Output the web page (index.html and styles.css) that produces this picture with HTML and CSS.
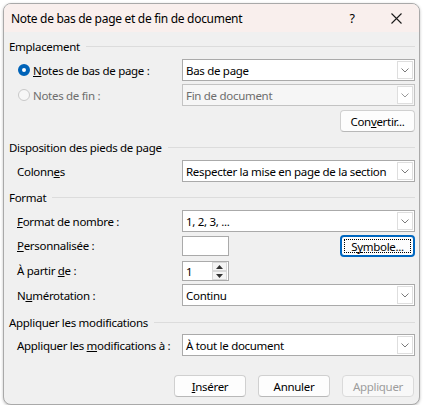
FILE: index.html
```html
<!DOCTYPE html>
<html lang="fr">
<head>
<meta charset="utf-8">
<title>Note de bas de page et de fin de document</title>
<link rel="stylesheet" href="styles.css">
</head>
<body>
<div class="dialog">
  <div class="titlebar">
    <span class="title">Note de bas de page et de fin de document</span>
    <span class="help">?</span>
    <span class="close"><svg width="11" height="11" viewBox="0 0 11 11"><path d="M0.5 0.5 L10.5 10.5 M10.5 0.5 L0.5 10.5" stroke="#1a1a1a" stroke-width="1.1" fill="none"/></svg></span>
  </div>
  <div class="body">
    <div class="group-head h1"><span>Emplacement</span><i class="rule"></i></div>
    <div class="row r-a">
      <div class="radio-label"><span class="radio on"></span><span><u>N</u>otes de bas de page :</span></div>
      <div class="combo"><span class="val">Bas de page</span><span class="arrow"><svg width="8" height="5" viewBox="0 0 8 5"><path d="M0.5 0.5 L4 4 L7.5 0.5" stroke="#7a7a7a" fill="none"/></svg></span></div>
    </div>
    <div class="row r-b">
      <div class="radio-label disabled"><span class="radio off"></span><span>Notes de fin :</span></div>
      <div class="combo dis"><span class="val">Fin de document</span><span class="arrow"><svg width="8" height="5" viewBox="0 0 8 5"><path d="M0.5 0.5 L4 4 L7.5 0.5" stroke="#9a9a9a" fill="none"/></svg></span></div>
    </div>
    <div class="btn-row r-c"><span class="btn wide">Con<u>v</u>ertir...</span></div>

    <div class="group-head h2"><span>Disposition des pieds de page</span><i class="rule"></i></div>
    <div class="row r-d">
      <div class="lbl">Colonn<u>e</u>s</div>
      <div class="combo"><span class="val">Respecter la mise en page de la section</span><span class="arrow"><svg width="8" height="5" viewBox="0 0 8 5"><path d="M0.5 0.5 L4 4 L7.5 0.5" stroke="#7a7a7a" fill="none"/></svg></span></div>
    </div>

    <div class="group-head h3"><span>Format</span><i class="rule"></i></div>
    <div class="row r-e">
      <div class="lbl"><u>F</u>ormat de nombre :</div>
      <div class="combo"><span class="val">1, 2, 3, ...</span><span class="arrow"><svg width="8" height="5" viewBox="0 0 8 5"><path d="M0.5 0.5 L4 4 L7.5 0.5" stroke="#7a7a7a" fill="none"/></svg></span></div>
    </div>
    <div class="row r-f">
      <div class="lbl"><u>P</u>ersonnalisée :</div>
      <div class="split">
        <span class="textbox"></span>
        <span class="btn wide focus"><span class="focus-ring">S<u>y</u>mbole...</span></span>
      </div>
    </div>
    <div class="row r-g">
      <div class="lbl">À partir <u>d</u>e :</div>
      <div class="spin">
        <span class="val">1</span>
        <span class="spin-btns">
          <span class="sb"><svg width="7" height="4" viewBox="0 0 7 4"><path d="M0 4 L3.5 0 L7 4 Z" fill="#333"/></svg></span>
          <span class="sb"><svg width="7" height="4" viewBox="0 0 7 4"><path d="M0 0 L3.5 4 L7 0 Z" fill="#333"/></svg></span>
        </span>
      </div>
    </div>
    <div class="row r-h">
      <div class="lbl">N<u>u</u>mérotation :</div>
      <div class="combo"><span class="val">Continu</span><span class="arrow"><svg width="8" height="5" viewBox="0 0 8 5"><path d="M0.5 0.5 L4 4 L7.5 0.5" stroke="#7a7a7a" fill="none"/></svg></span></div>
    </div>

    <div class="group-head h4"><span>Appliquer les modifications</span><i class="rule"></i></div>
    <div class="row r-i">
      <div class="lbl">Appliquer les <u>m</u>odifications à :</div>
      <div class="combo"><span class="val">À tout le document</span><span class="arrow"><svg width="8" height="5" viewBox="0 0 8 5"><path d="M0.5 0.5 L4 4 L7.5 0.5" stroke="#7a7a7a" fill="none"/></svg></span></div>
    </div>

    <div class="footer">
      <span class="btn"><u>I</u>nsérer</span>
      <span class="btn">Annuler</span>
      <span class="btn disabled">Appliquer</span>
    </div>
  </div>
</div>
</body>
</html>
```

FILE: styles.css
```css
html, body {
  margin: 0;
  padding: 0;
  background: #ffffff;
}
body {
  font-family: "Noto Sans", "Open Sans", sans-serif;
  font-size: 11.5px;
  letter-spacing: -0.3px;
  color: #000;
  overflow: hidden;
}
.dialog {
  margin: 3px 0 0 3px;
  width: 417px;
  height: 402px;
  box-sizing: border-box;
  border: 1px solid #a9a9a9;
  border-radius: 8px;
  background: #f0f0f0;
  overflow: hidden;
  box-shadow: 0 1px 3px rgba(0,0,0,0.25);
}
.titlebar {
  height: 28px;
  background: #f9efed;
  display: flex;
  align-items: center;
  padding-left: 7px;
}
.title {
  font-size: 12px;
  flex: 1;
}
.help {
  font-size: 12.5px;
  width: 12px;
  margin-right: 33px;
  text-align: center;
}
.close {
  width: 11px;
  height: 11px;
  margin-right: 17px;
  display: flex;
}
.body {
  padding: 6px 4px 0 5px;
}
.group-head {
  height: 16px;
  display: flex;
  align-items: center;
  gap: 6px;
}
.group-head .rule {
  flex: 1;
  height: 1px;
  background: #dcdcdc;
}
.h2 { margin-top: 7px; }
.h3 { margin-top: 7px; }
.h4 { margin-top: 8px; }

.row {
  display: grid;
  grid-template-columns: 173px 1fr;
  align-items: center;
  height: 22px;
}
.r-a { margin-top: 5px; }
.r-b { margin-top: 3px; }
.r-d { margin-top: 5px; }
.r-e { margin-top: 5px; }
.r-f { margin-top: 3px; height: 21px; }
.r-g { margin-top: 4px; height: 21px; }
.r-h { margin-top: 3px; }
.r-i { margin-top: 4px; }

.lbl { padding-left: 8px; }
.radio-label {
  display: flex;
  align-items: center;
  padding-left: 9px;
  gap: 3px;
}
.radio-label.disabled { color: #6d6d6d; }
.radio {
  width: 12px;
  height: 12px;
  box-sizing: border-box;
  border-radius: 50%;
  display: inline-block;
}
.radio.on {
  background: #ffffff;
  border: 4px solid #0063b8;
}
.radio.off {
  border: 1px solid #c9c9c9;
  background: #f7f7f7;
}

.combo {
  height: 22px;
  box-sizing: border-box;
  border: 1px solid #aaaaaa;
  background: #ffffff;
  display: flex;
  align-items: center;
}
.combo .val {
  flex: 1;
  padding-left: 3px;
  white-space: nowrap;
  overflow: hidden;
}
.combo .arrow {
  width: 16px;
  height: 18px;
  box-sizing: border-box;
  margin-right: 1px;
  border: 1px solid #dedede;
  background: #ffffff;
  display: flex;
  align-items: center;
  justify-content: center;
}
.combo.dis {
  background: #f6f6f6;
  border-color: #c3c3c3;
  color: #6d6d6d;
}
.combo.dis .arrow { background: #ffffff; }

.btn-row {
  display: flex;
  justify-content: flex-end;
  margin-top: 4px;
  height: 22px;
}
.btn {
  width: 72px;
  height: 22px;
  box-sizing: border-box;
  border: 1px solid #d0d0d0;
  border-bottom-color: #b8b8b8;
  border-radius: 4px;
  background: #fdfdfd;
  display: flex;
  align-items: center;
  justify-content: center;
}
.btn.wide { width: 75px; }
.btn.disabled { color: #9d9d9d; border-color: #dadada; background: #f8f8f8; }
.btn.focus {
  border: 2px solid #0067c0;
  height: 22px;
}
.focus-ring {
  border: 1px dotted #000;
  width: 67px;
  height: 14px;
  line-height: 14px;
  text-align: center;
  box-sizing: border-box;
}

.split {
  display: flex;
  justify-content: space-between;
  align-items: center;
  height: 21px;
}
.textbox {
  width: 47px;
  height: 20px;
  box-sizing: border-box;
  border: 1px solid #aaaaaa;
  background: #fff;
  margin-top: 1px;
}
.spin {
  width: 47px;
  height: 20px;
  box-sizing: border-box;
  border: 1px solid #aaaaaa;
  background: #fff;
  display: flex;
  align-items: center;
  margin-top: 1px;
}
.spin .val { flex: 1; padding-left: 3px; }
.spin-btns {
  width: 15px;
  height: 18px;
  display: flex;
  flex-direction: column;
  margin-right: 1px;
}
.sb {
  flex: 1;
  box-sizing: border-box;
  border: 1px solid #d8d8d8;
  background: #f4f4f4;
  display: flex;
  align-items: center;
  justify-content: center;
}

.footer {
  display: flex;
  justify-content: flex-end;
  gap: 12px;
  margin-top: 19px;
  padding-right: 1px;
}
```
